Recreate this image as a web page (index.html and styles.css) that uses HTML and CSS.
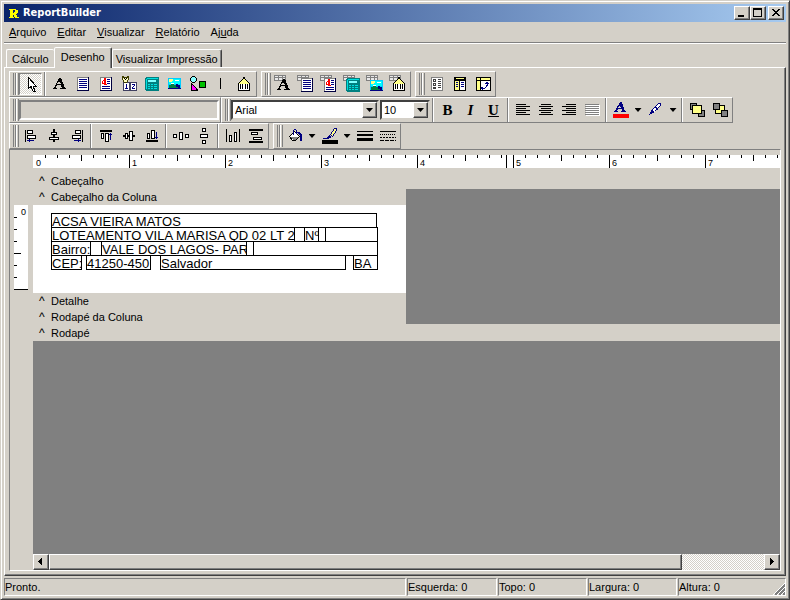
FILE: index.html
```html
<!DOCTYPE html>
<html lang="pt-BR">
<head>
<meta charset="utf-8">
<title>ReportBuilder</title>
<link rel="stylesheet" href="styles.css">
</head>
<body>
<svg class="defs" aria-hidden="true">
  <defs>
    <symbol id="letter" viewBox="0 0 16 16"><path d="M7 2h2l4 10h1v1H8v-1h2L9 9H5L4 12h1v1H1v-1h1zM7 5L5 8h4z"/></symbol>
    <symbol id="memo" viewBox="0 0 16 16"><path fill="#fff" d="M2 1h12v13H2z"/><path fill="#808080" d="M2 1h11v1H3v12H2z"/><path fill="#000040" d="M13 1h1v14H2v-1h11z"/><path fill="#000080" d="M4 3h8v1H4zM4 5h8v1H4zM4 7h8v1H4zM4 9h8v1H4zM4 11h8v1H4z"/></symbol>
    <symbol id="rich" viewBox="0 0 16 16"><path fill="#fff" d="M2 1h12v13H2z"/><path fill="#808080" d="M2 1h11v1H3v12H2z"/><path fill="#000040" d="M13 1h1v14H2v-1h11z"/><path fill="#000080" d="M9 3h3v1H9zM9 5h3v1H9zM9 7h3v1H9zM4 10h8v1H4zM4 12h8v1H4z"/><path fill="#f00" d="M6 2h2v6h1v1H6V8H4V5h1V4h1zM6 5H5v2h1z"/></symbol>
    <symbol id="calc" viewBox="0 0 16 16"><path fill="#008080" d="M2 1h12l1 1v12l-1 1H2l-1-1V2z"/><path fill="#00e0e0" d="M3 2h11v1H3zM2 3h1v10H2z"/><path fill="#80ffff" d="M4 4h8v2H4z"/><path fill="#00e0e0" d="M4 8h2v1H4zM7 8h2v1H7zM10 8h3v1h-3zM4 10h2v1H4zM7 10h2v1H7zM10 10h3v1h-3zM4 12h2v1H4zM7 12h2v1H7zM10 12h3v1h-3z"/></symbol>
    <symbol id="image" viewBox="0 0 16 16"><path fill="#0cf" d="M1 2h13v11H1z"/><path fill="#0ff" d="M2 3h11v5H2z"/><path fill="#ff8" d="M2 3h4v2H5v1H2z"/><path fill="#fff" d="M8 4h4v1H8zM4 7h3v1H4z"/><path fill="#008040" d="M2 12V9h2V8h3v1h2v1h2v1h2v1z"/><path fill="#000080" d="M9 8h2v1h2v3h-2v-1H9zM1 12h13v1H1z"/></symbol>
    <symbol id="barcode" viewBox="0 0 16 16"><path d="M7 1h2v2h1v1h1v1h1v1h1v1h1v8H2V7h1V6h1V5h1V4h1V3h1z"/><path fill="#ff8" d="M7 3h2v1h1v1h1v1h1v1h1v1H3V7h1V6h1V5h1V4h1z"/><path fill="#fff" d="M3 8h10v6H3z"/><path d="M4 8h1v5H4zM6 8h1v5H6zM9 8h1v5H9zM11 8h1v5h-1z"/></symbol>
    <symbol id="grid" viewBox="0 0 16 16"><path fill="#e8e8e8" d="M0 0h12v6H0z"/><path fill="#808080" d="M0 0h12v1H0zM0 2h12v1H0zM0 5h12v1H0zM0 0h1v6H0zM4 0h1v6H4zM8 0h1v6H8zM11 0h1v6h-1z"/></symbol>
  </defs>
</svg>

<main class="window">
  <header class="title">
    <svg class="logo" viewBox="0 0 10 11" aria-hidden="true"><path fill="#ff0" fill-rule="evenodd" d="M0 1h7v1h2v3H8v1H7v1h1v2h2v1H6V9H5V7H4v2h1v1H0V9h1V2H0zM4 2v3h1V4h1V2z"/></svg>
    <h1>ReportBuilder</h1>
    <button class="cap" aria-label="Minimizar"><svg viewBox="0 0 12 10"><path d="M2 7h6v2H2z"/></svg></button>
    <button class="cap" aria-label="Maximizar"><svg viewBox="0 0 12 10"><path d="M1 0h9v9H1zM2 2v6h7V2z" fill-rule="evenodd"/></svg></button>
    <button class="cap close" aria-label="Fechar"><svg viewBox="0 0 12 10"><path d="M2 1h2v1h1v1h2V2h1V1h2v1H9v1H8v1H7v1h1v1h1v1h1v1H8V7H7V6H5v1H4v1H2V7h1V6h1V5h1V4H4V3H3V2H2z"/></svg></button>
  </header>

  <nav class="menu">
    <a href="#"><u>A</u>rquivo</a><a href="#"><u>E</u>ditar</a><a href="#"><u>V</u>isualizar</a><a href="#"><u>R</u>elatório</a><a href="#">Aj<u>u</u>da</a>
  </nav>

  <div class="tabs" role="tablist">
    <button role="tab" class="tab">Cálculo</button><button role="tab" class="tab active" aria-selected="true">Desenho</button><button role="tab" class="tab">Visualizar Impressão</button>
  </div>

  <section class="page">
    <div class="dock">
      <div class="bars">
        <div class="bar">
          <i class="grip"></i>
          <button class="tool pressed" aria-label="Selecionar"><svg viewBox="0 0 16 16"><path fill="#fff" stroke="#000" d="M5.500 1.500v11l2.500-2 2 4.500h2l-2-5h3z"/></svg></button>
          <i class="sep"></i>
          <button class="tool" aria-label="Rótulo"><svg><use href="#letter"/></svg></button>
          <button class="tool" aria-label="Memo"><svg><use href="#memo"/></svg></button>
          <button class="tool" aria-label="Texto rico"><svg><use href="#rich"/></svg></button>
          <button class="tool" aria-label="Variável do sistema"><svg viewBox="0 0 16 16"><path fill="#404060" d="M2 6h7v9H2zM9 6h7v9H9z"/><path fill="#fff" d="M3 7h5v7H3zM10 7h5v7h-5z"/><path fill="#404000" d="M1 0h2v1h3V0h2v4H7v2H6v1H3V6H2V4H1z"/><path fill="#ffffc0" d="M2 2h5v2H6v2H3V4H2z"/><path d="M3 2h1v1h1V2h1v1H5v1H4V3H3z"/><path fill="#000080" d="M5 8h1v4h1v1H4v-1h1zM11 8h3v2h-1v1h-1v1h2v1h-3v-2h1v-1h1V9h-2z"/></svg></button>
          <button class="tool" aria-label="Variável"><svg><use href="#calc"/></svg></button>
          <button class="tool" aria-label="Imagem"><svg><use href="#image"/></svg></button>
          <button class="tool" aria-label="Forma"><svg viewBox="0 0 16 16"><path d="M2 0h3v1h1v1h1v3H6v1H5v1H2V6H1V5H0V2h1V1h1z"/><path fill="#8ff" d="M2 1h3v1h1v3H5v1H2V5H1V2h1z"/><path d="M1 7h1v1h1v1h1v1h1v1h1v1h1v1h1v2H1z"/><path fill="#f0f" d="M2 9h1v1h1v1h1v1h1v2H2z"/><path d="M9 5h7v7H9z"/><path fill="#00c000" d="M10 6h5v5h-5z"/></svg></button>
          <button class="tool" aria-label="Linha"><svg viewBox="0 0 16 16"><path d="M7 2h1v11H7z"/></svg></button>
          <button class="tool" aria-label="Código de barras"><svg><use href="#barcode"/></svg></button>
        </div>
        <div class="bar">
          <i class="grip"></i>
          <button class="tool data" aria-label="Texto do banco"><svg viewBox="0 0 18 18"><use href="#grid" width="16" height="16"/><use href="#letter" x="2" y="2" width="16" height="16"/></svg></button>
          <button class="tool data" aria-label="Memo do banco"><svg viewBox="0 0 18 18"><use href="#grid" width="16" height="16"/><use href="#memo" x="2" y="2" width="16" height="16"/></svg></button>
          <button class="tool data" aria-label="Texto rico do banco"><svg viewBox="0 0 18 18"><use href="#grid" width="16" height="16"/><use href="#rich" x="2" y="2" width="16" height="16"/></svg></button>
          <button class="tool data" aria-label="Cálculo do banco"><svg viewBox="0 0 18 18"><use href="#grid" width="16" height="16"/><use href="#calc" x="2" y="2" width="16" height="16"/></svg></button>
          <button class="tool data" aria-label="Imagem do banco"><svg viewBox="0 0 18 18"><use href="#grid" width="16" height="16"/><use href="#image" x="3" y="3" width="16" height="16"/></svg></button>
          <button class="tool data" aria-label="Código de barras do banco"><svg viewBox="0 0 18 18"><use href="#grid" width="16" height="16"/><use href="#barcode" x="2" y="1" width="16" height="16"/></svg></button>
        </div>
        <div class="bar">
          <i class="grip"></i>
          <button class="tool" aria-label="Região"><svg viewBox="0 0 16 16"><path fill="#808080" d="M2 1h12v14H2z"/><path fill="#fff" d="M3 2h10v12H3z"/><path fill="#404040" fill-rule="evenodd" d="M4 3h3v3H4zM5 4v1h1V4zM4 7h3v3H4zM5 8v1h1V8zM4 11h3v2H4zM9 3h3v1H9zM9 5h3v1H9zM9 7h3v1H9zM9 9h3v1H9zM9 11h3v1H9z"/></svg></button>
          <button class="tool" aria-label="Sub-relatório"><svg viewBox="0 0 16 16"><path d="M2 1h12v14H2z"/><path fill="#fff" d="M8 5h5v9H8z"/><path fill="#ff8" d="M3 5h4v9H3zM4 2h8v1H4z"/><path fill="#000080" d="M4 6h2v1H4zM4 8h2v1H4zM4 10h2v1H4zM9 6h3v1H9zM9 8h3v1H9zM9 10h3v1H9z"/></svg></button>
          <button class="tool" aria-label="Tabela cruzada"><svg viewBox="0 0 16 16"><path d="M1 1h15v14H1z"/><path fill="#fff" d="M2 2h13v12H2z"/><path fill="#ff8" d="M2 2h3v2H2zM6 2h9v2H6zM2 5h3v9H2z"/><path d="M2 4h13v1H2zM5 2h1v12H5z"/><path fill="#000080" d="M11 6h2v1h1v1h-1v2h-1v1h-1v1h-1v1H8v1H7v-1H6v-2h2v1h2v-1h1V9h1V8h-2V7h1z"/></svg></button>
        </div>
      </div>

      <div class="bars tight">
        <div class="bar">
          <i class="grip"></i>
          <input class="edit" type="text" aria-label="Conteúdo" disabled>
        </div>
        <div class="bar">
          <i class="grip"></i>
          <label class="combo font"><select aria-label="Fonte"><option>Arial</option></select><i class="drop"></i></label>
          <label class="combo size"><select aria-label="Tamanho"><option>10</option></select><i class="drop"></i></label>
          <i class="sep"></i>
          <button class="tool text" aria-label="Negrito"><b>B</b></button>
          <button class="tool text" aria-label="Itálico"><b><em>I</em></b></button>
          <button class="tool text" aria-label="Sublinhado"><b><u>U</u></b></button>
          <i class="sep"></i>
          <button class="tool" aria-label="Alinhar à esquerda"><svg viewBox="0 0 16 16"><path d="M1 2h10v1H1zM1 4h14v1H1zM1 6h10v1H1zM1 8h14v1H1zM1 10h10v1H1zM1 12h14v1H1z"/></svg></button>
          <button class="tool" aria-label="Centralizar"><svg viewBox="0 0 16 16"><path d="M3 2h10v1H3zM1 4h14v1H1zM3 6h10v1H3zM1 8h14v1H1zM3 10h10v1H3zM1 12h14v1H1z"/></svg></button>
          <button class="tool" aria-label="Alinhar à direita"><svg viewBox="0 0 16 16"><path d="M5 2h10v1H5zM1 4h14v1H1zM5 6h10v1H5zM1 8h14v1H1zM5 10h10v1H5zM1 12h14v1H1z"/></svg></button>
          <button class="tool" aria-label="Justificar" disabled><svg viewBox="0 0 16 16"><path fill="#fff" d="M2 3h14v11H2z"/><path fill="#808080" d="M1 2h14v1H1zM1 4h14v1H1zM1 6h14v1H1zM1 8h14v1H1zM1 10h14v1H1zM1 12h14v1H1z"/></svg></button>
          <i class="sep"></i>
          <button class="tool" aria-label="Cor da fonte"><svg viewBox="0 0 16 16"><path fill="#000080" fill-rule="evenodd" d="M7 0h2l3 9h1v1H8V9h1V7H5L4 9h1v1H1V9h1zM7 3L5 6h3z"/><path fill="#f00" d="M0 12h16v4H0z"/></svg></button>
          <button class="arrow" aria-label="Opções de cor da fonte"></button>
          <button class="tool" aria-label="Realce"><svg viewBox="0 0 16 16"><path fill="#fff" stroke="#000080" d="M2.500 11.500l2-4 6-6h2v2l-6 6z"/><path fill="#000080" d="M2 12l1-4 3 3zM6 5l3 3 1-1-3-3z"/></svg></button>
          <button class="arrow" aria-label="Opções de realce"></button>
          <i class="sep"></i>
          <button class="tool" aria-label="Trazer para frente"><svg viewBox="0 0 16 16"><path d="M1 1h7v7H1zM9 8h7v7H9z"/><path fill="#808080" d="M2 2h5v5H2zM10 9h5v5h-5z"/><path d="M3 3h10v9H3z"/><path fill="#ff8" d="M4 4h8v7H4z"/></svg></button>
          <button class="tool" aria-label="Enviar para trás"><svg viewBox="0 0 16 16"><path d="M3 3h10v9H3z"/><path fill="#ff8" d="M4 4h8v7H4z"/><path d="M1 1h7v7H1zM9 8h7v7H9z"/><path fill="#808080" d="M2 2h5v5H2zM10 9h5v5h-5z"/></svg></button>
        </div>
      </div>

      <div class="bars">
        <div class="bar">
          <i class="grip"></i>
          <button class="tool" aria-label="Alinhar esquerdas"><svg viewBox="0 0 16 16"><path d="M2 2h1v12H2z"/><path fill="#fff" stroke="#000" d="M4.500 2.500h5v3h-5zM4.500 7.500h8v3h-8z"/><path fill="#000080" d="M4 12h7v1H4zM6 11h1v3H6z"/></svg></button>
          <button class="tool" aria-label="Alinhar centros"><svg viewBox="0 0 16 16"><path d="M7 1h2v13H7z"/><path fill="#fff" stroke="#000" d="M5.500 4.500h5v2h-5zM3.500 9.500h9v2h-9z"/></svg></button>
          <button class="tool" aria-label="Alinhar direitas"><svg viewBox="0 0 16 16"><path d="M13 2h1v12h-1z"/><path fill="#fff" stroke="#000" d="M6.500 2.500h5v3h-5zM3.500 7.500h8v3h-8z"/><path fill="#000080" d="M5 12h7v1H5zM9 11h1v3H9z"/></svg></button>
          <i class="sep"></i>
          <button class="tool" aria-label="Alinhar topos"><svg viewBox="0 0 16 16"><path d="M2 2h12v2H2z"/><path fill="#fff" stroke="#000" d="M3.500 5.500h2v5h-2zM7.500 5.500h3v8h-3z"/><path fill="#000080" d="M12 5h1v7h-1zM11 6h3v1h-3z"/></svg></button>
          <button class="tool" aria-label="Alinhar meios"><svg viewBox="0 0 16 16"><path d="M2 7h12v2H2z"/><path fill="#fff" stroke="#000" d="M4.500 5.500h2v5h-2zM8.500 3.500h3v9h-3z"/></svg></button>
          <button class="tool" aria-label="Alinhar bases"><svg viewBox="0 0 16 16"><path d="M2 12h12v2H2z"/><path fill="#fff" stroke="#000" d="M3.500 5.500h2v5h-2zM7.500 2.500h3v8h-3z"/><path fill="#000080" d="M12 4h1v7h-1zM11 9h3v1h-3z"/></svg></button>
          <i class="sep"></i>
          <button class="tool" aria-label="Espaçar horizontalmente"><svg viewBox="0 0 16 16"><path fill="#fff" stroke="#000" d="M.500 6.500h3v3h-3zM6.500 4.500h3v7h-3zM12.500 6.500h3v3h-3z"/></svg></button>
          <button class="tool" aria-label="Espaçar verticalmente"><svg viewBox="0 0 16 16"><path fill="#fff" stroke="#000" d="M6.500.500h3v3h-3zM4.500 6.500h7v3h-7zM6.500 12.500h3v3h-3z"/></svg></button>
          <i class="sep"></i>
          <button class="tool" aria-label="Centralizar na horizontal"><svg viewBox="0 0 16 16"><path d="M1 1h1v13H1zM14 1h1v13h-1z"/><path fill="#fff" stroke="#000" d="M4.500 7.500h2v6h-2zM9.500 4.500h2v9h-2z"/></svg></button>
          <button class="tool" aria-label="Centralizar na vertical"><svg viewBox="0 0 16 16"><path d="M1 1h14v2H1zM1 13h14v2H1z"/><path fill="#fff" stroke="#000" d="M3.500 4.500h6v2h-6zM5.500 9.500h8v2h-8z"/></svg></button>
        </div>
        <div class="bar">
          <i class="grip"></i>
          <button class="tool" aria-label="Cor de preenchimento"><svg viewBox="0 0 16 16"><path fill="#fff" stroke="#000" d="M2.500 8.500l5-5 5 5-4 4h-3z"/><path fill="#808080" d="M4 9h7l-3 3H6z"/><path stroke="#000080" fill="none" d="M6.500 7V2.500l1-1h1l1 1V6"/><path fill="#000080" d="M10 4h3l2 3v6h-2V8z"/></svg></button>
          <button class="arrow" aria-label="Opções de preenchimento"></button>
          <button class="tool" aria-label="Cor da linha"><svg viewBox="0 0 16 16"><path fill="#000080" d="M1 10h4l2-3 3 2-4 2H1z"/><path fill="#ff8" stroke="#000080" d="M8.500 6.500l4-6h2v2l-4 6z"/><path d="M0 12h16v4H0z"/></svg></button>
          <button class="arrow" aria-label="Opções de cor da linha"></button>
          <button class="tool" aria-label="Espessura da linha"><svg viewBox="0 0 16 16"><path d="M0 3h16v1H0zM0 6h16v2H0zM0 10h16v3H0z"/></svg></button>
          <button class="tool" aria-label="Estilo da linha"><svg viewBox="0 0 16 16"><path d="M0 3h16v1H0z"/><path stroke="#000" stroke-dasharray="1 1" d="M0 6.500h16"/><path stroke="#000" stroke-dasharray="2 1" d="M0 9.500h16"/><path stroke="#000" stroke-dasharray="4 1" d="M0 12.500h16"/></svg></button>
        </div>
      </div>
    </div>

    <div class="designer">
      <div class="gutter">
        <div class="vruler"><span>0</span></div>
      </div>
      <div class="workspace">
        <div class="hruler">
          <span>0</span><span>1</span><span>2</span><span>3</span><span>4</span><span>5</span><span>6</span><span>7</span>
          <i class="guide"></i>
        </div>
        <div class="band">Cabeçalho</div>
        <div class="columns">
          <div class="column">
            <div class="band">Cabeçalho da Coluna</div>
            <div class="canvas">
              <div class="field f1">ACSA VIEIRA MATOS</div>
              <div class="field f2">LOTEAMENTO VILA MARISA QD 02 LT 2</div>
              <div class="field f3">Nº</div>
              <div class="field f4"></div>
              <div class="field f5">Bairro:</div>
              <div class="field f6">VALE DOS LAGOS- PAR</div>
              <div class="field f7"></div>
              <div class="field f8">CEP:</div>
              <div class="field f9">41250-450</div>
              <div class="field f10">Salvador</div>
              <div class="field f11">BA</div>
            </div>
            <div class="band">Detalhe</div>
            <div class="band">Rodapé da Coluna</div>
          </div>
          <div class="void"></div>
        </div>
        <div class="band">Rodapé</div>
        <div class="void"></div>
        <div class="scroll">
          <button class="step" aria-label="Rolar para a esquerda"><svg viewBox="0 0 8 8"><path d="M5 0v7H4V6H3V5H2V4H1V3h1V2h1V1h1V0z"/></svg></button>
          <div class="thumb"></div>
          <div class="track"></div>
          <button class="step" aria-label="Rolar para a direita"><svg viewBox="0 0 8 8"><path d="M2 0v7h1V6h1V5h1V4h1V3H5V2H4V1H3V0z"/></svg></button>
        </div>
      </div>
    </div>
  </section>

  <footer class="status">
    <span>Pronto.</span><span>Esquerda: 0</span><span>Topo: 0</span><span>Largura: 0</span><span>Altura: 0
      <svg class="size-grip" viewBox="0 0 12 12" aria-hidden="true"><path stroke="#fff" d="M0 12L12 0M4 12l8-8M8 12l4-4"/><path stroke="#808080" stroke-width="2" d="M2 12L12 2M6 12l6-6M10 12l2-2"/></svg></span>
  </footer>
</main>
</body>
</html>
```
FILE: styles.css
```css
:root {
  --face: #d4d0c8;
  --shade: #808080;
  --dark: #404040;
}

* { box-sizing: border-box; }

body {
  margin: 0;
  background: var(--face);
  color: #000;
  font: 11px/14px "Liberation Sans", Arial, sans-serif;
}

button, input, select {
  margin: 0;
  padding: 0;
  border: 0;
  border-radius: 0;
  background: none;
  color: inherit;
  font: inherit;
}

svg { display: block; shape-rendering: crispEdges; fill: #000; }
.defs { position: absolute; width: 0; height: 0; }

.window {
  display: flex;
  flex-direction: column;
  min-height: 100vh;
  padding: 3px;
  border: 1px solid;
  border-color: var(--face) var(--dark) var(--dark) var(--face);
  box-shadow: inset 1px 1px #fff, inset -1px -1px var(--shade);
}

/* Title bar */
.title {
  display: flex;
  align-items: center;
  height: 18px;
  padding: 0 2px 0 5px;
  background: linear-gradient(90deg, #0a246a, #a6caf0);
}
.logo { width: 10px; height: 11px; }
.title h1 {
  flex: 1;
  margin: 0 0 0 4px;
  color: #fff;
  font: bold 11px/18px "DejaVu Sans Condensed", "DejaVu Sans", sans-serif;
}
.cap {
  width: 16px;
  height: 14px;
  padding: 1px;
  background: var(--face);
  border: 1px solid;
  border-color: #fff var(--dark) var(--dark) #fff;
  box-shadow: inset -1px -1px var(--shade);
}
.cap svg { width: 12px; height: 10px; }
.cap.close { margin-left: 2px; }

/* Menu */
.menu {
  display: flex;
  gap: 11px;
  height: 21px;
  padding: 3px 5px 0;
  border-bottom: 1px solid var(--shade);
  box-shadow: 0 1px #fff;
}
.menu a { color: inherit; text-decoration: none; }

/* Tabs */
.tabs {
  display: flex;
  align-items: flex-end;
  height: 24px;
  padding-left: 2px;
}
.tab {
  height: 18px;
  padding: 0 3px;
  border: solid;
  border-width: 1px 1px 0;
  border-color: #fff var(--dark) transparent #fff;
  border-radius: 2px 2px 0 0;
  box-shadow: inset -1px 0 var(--shade);
}
.tab:first-child { padding: 0 5px; border-right: 0; box-shadow: none; }
.tab.active {
  z-index: 1;
  height: 21px;
  margin-bottom: -1px;
  padding: 0 6px 3px;
  background: var(--face);
}

.page {
  display: flex;
  flex: 1;
  flex-direction: column;
  padding: 3px 4px 4px;
  border: 1px solid;
  border-color: #fff var(--dark) var(--dark) #fff;
  box-shadow: inset -1px -1px var(--shade);
}

/* Toolbars */
.bars { display: flex; gap: 4px; height: 26px; }
.bars.tight { gap: 0; }
.bar {
  display: flex;
  align-items: center;
  padding: 0 1px 0 3px;
  border: 1px solid;
  border-color: #fff var(--shade) var(--shade) #fff;
}
.grip {
  width: 6px;
  height: 22px;
  border: solid;
  border-width: 0 1px;
  border-color: #fff var(--shade);
  background: linear-gradient(90deg, transparent 1px, var(--shade) 1px 2px, #fff 2px 3px, transparent 3px);
}
.sep {
  width: 2px;
  height: 24px;
  margin: 0 2px;
  border-left: 1px solid var(--shade);
  border-right: 1px solid #fff;
}
.tool {
  display: grid;
  place-items: center;
  width: 23px;
  height: 22px;
}
.tool svg { width: 16px; height: 16px; }
.tool.data svg { width: 18px; height: 18px; }
.tool.pressed {
  border: 1px solid;
  border-color: var(--shade) #fff #fff var(--shade);
  background: repeating-conic-gradient(#fff 0 25%, var(--face) 0 50%) 0 0 / 2px 2px;
}
.tool.text { font: 15px/20px "Liberation Serif", serif; }
.arrow { width: 12px; height: 22px; }
.arrow::before {
  content: "";
  display: block;
  width: 7px;
  height: 4px;
  margin: 0 auto;
  background: #000;
  clip-path: polygon(0 0, 100% 0, 50% 100%);
}
.edit {
  width: 200px;
  height: 20px;
  border: 2px solid;
  border-color: var(--shade) #fff #fff var(--shade);
  background: var(--face);
}
.combo { position: relative; height: 20px; }
.combo select {
  width: 100%;
  height: 100%;
  padding-left: 2px;
  appearance: none;
  border: 2px solid;
  border-color: var(--dark) var(--face) var(--face) var(--dark);
  background: #fff;
}
.combo.font { width: 148px; }
.combo.size { width: 50px; margin-left: 1px; }
.drop {
  position: absolute;
  top: 2px;
  right: 2px;
  bottom: 2px;
  display: grid;
  place-items: center;
  width: 15px;
  border: 1px solid;
  border-color: #fff var(--dark) var(--dark) #fff;
  background: var(--face);
  box-shadow: inset -1px -1px var(--shade);
  pointer-events: none;
}
.drop::before {
  content: "";
  width: 7px;
  height: 4px;
  background: #000;
  clip-path: polygon(0 0, 100% 0, 50% 100%);
}

/* Designer */
.designer {
  display: flex;
  flex: 1;
  border: 1px solid;
  border-color: var(--shade) #fff #fff var(--shade);
}
.gutter { width: 23px; padding: 55px 5px 0 4px; }
.vruler {
  height: 85px;
  padding-right: 2px;
  border-bottom: 1px solid #000;
  background:
    linear-gradient(#000, #000) 0 48px / 7px 1px no-repeat,
    repeating-linear-gradient(transparent 0 12px, #000 12px 13px, transparent 13px 24px, #000 24px 25px, transparent 25px 36px, #000 36px 37px, transparent 37px 48px) 0 0 / 3px 100% no-repeat,
    #fff;
  font-size: 9px;
  text-align: right;
}
.workspace { display: flex; flex: 1; flex-direction: column; min-width: 0; }
.hruler {
  position: relative;
  display: flex;
  flex: none;
  height: 13px;
  margin: 5px 0;
  overflow: hidden;
  background: #fff;
  font-size: 9px;
  line-height: 16px;
}
.hruler span {
  flex: 0 0 96px;
  padding-left: 2px;
  border-left: 1px solid #000;
  background:
    linear-gradient(#000, #000) 47px 0 / 1px 6px no-repeat,
    repeating-linear-gradient(90deg, transparent 0 11px, #000 11px 12px) 0 0 / 95px 3px no-repeat;
}
.hruler span:first-child { border-left-color: #fff; }
.guide { position: absolute; left: 473px; width: 1px; height: 13px; background: #000; }

.band { height: 16px; padding-left: 6px; line-height: 16px; }
.band::before { content: "^"; display: inline-block; width: 12px; font-size: 12px; line-height: 12px; }
.columns { display: flex; }
.column { width: 373px; }
.void { flex: 1; background: var(--shade); }
.columns .void { margin-bottom: 1px; }

.canvas { position: relative; height: 88px; background: #fff; }
.field {
  position: absolute;
  height: 15px;
  overflow: hidden;
  border: 1px solid #000;
  font-size: 13px;
  line-height: 15px;
  white-space: nowrap;
}
.f1 { left: 18px; top: 8px; width: 326px; }
.f2 { left: 18px; top: 22px; width: 244px; }
.f3 { left: 271px; top: 22px; width: 15px; }
.f4 { left: 292px; top: 22px; width: 53px; }
.f5 { left: 18px; top: 36px; width: 40px; }
.f6 { left: 68px; top: 36px; width: 146px; }
.f7 { left: 220px; top: 36px; width: 125px; }
.f8 { left: 18px; top: 50px; width: 31px; }
.f9 { left: 53px; top: 50px; width: 65px; }
.f10 { left: 127px; top: 50px; width: 186px; }
.f11 { left: 320px; top: 50px; width: 25px; }

.scroll { display: flex; height: 16px; }
.step {
  display: grid;
  place-items: center;
  width: 16px;
}
.step svg { width: 8px; height: 8px; }
.step, .thumb {
  border: 1px solid;
  border-color: #fff var(--dark) var(--dark) #fff;
  background: var(--face);
  box-shadow: inset -1px -1px var(--shade);
}
.thumb { flex: 634; }
.track {
  flex: 82;
  background: repeating-conic-gradient(#fff 0 25%, var(--face) 0 50%) 0 0 / 2px 2px;
}

/* Status bar */
.status {
  display: grid;
  grid-template-columns: 1fr 90px 89px 89px 108px;
  gap: 1px;
  margin-top: 2px;
}
.status span {
  position: relative;
  height: 18px;
  padding: 1px 0;
  border: 1px solid;
  border-color: var(--shade) #fff #fff var(--shade);
}
.size-grip { position: absolute; right: 0; bottom: 0; width: 12px; height: 12px; }
```
